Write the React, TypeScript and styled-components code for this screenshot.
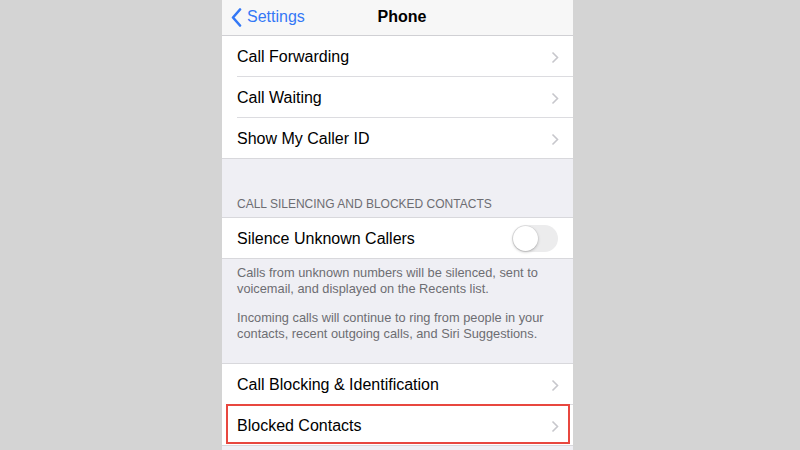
import React from 'react';
import styled, { createGlobalStyle } from 'styled-components';

const GlobalStyle = createGlobalStyle`
  html, body {
    margin: 0;
    padding: 0;
    background: #d4d4d4;
  }
  body {
    font-family: "Liberation Sans", Arial, sans-serif;
    -webkit-font-smoothing: antialiased;
  }
`;

const Page = styled.div`
  width: 800px;
  height: 450px;
  overflow: hidden;
  padding-left: 222px;
  box-sizing: border-box;
`;

const Screen = styled.div`
  width: 351px;
  height: 450px;
  background: #efeff4;
  display: flex;
  flex-direction: column;
`;

const NavBar = styled.div`
  height: 36px;
  flex-shrink: 0;
  background: #f7f7f7;
  border-bottom: 1px solid #d0d0d4;
  box-sizing: border-box;
  display: grid;
  grid-template-columns: 1fr auto 1fr;
  align-items: center;
  padding: 0 0 1px 9px;
`;

const BackLink = styled.div`
  display: flex;
  align-items: center;
  gap: 5px;
  color: #3478f6;
  font-size: 16px;
`;

const Title = styled.div`
  font-weight: bold;
  font-size: 16px;
  color: #000;
`;

const Group = styled.div<{ $top?: boolean }>`
  background: #fff;
  border-top: ${(p) => (p.$top ? 'none' : '1px solid #d8d8dc')};
  border-bottom: 1px solid #d8d8dc;
`;

const Row = styled.div<{ $last?: boolean }>`
  position: relative;
  box-sizing: border-box;
  height: ${(p) => (p.$last ? '40px' : '41px')};
  padding: 2px 14px 0 0;
  margin-left: 15px;
  display: flex;
  align-items: center;
  justify-content: space-between;
  border-bottom: ${(p) => (p.$last ? 'none' : '1px solid #dcdce0')};
  font-size: 16px;
  color: #000;
`;

const Highlight = styled.div`
  position: absolute;
  left: -11px;
  right: 3px;
  top: -1px;
  bottom: 1px;
  border: 2px solid #e8473f;
  pointer-events: none;
`;

const Chevron = () => (
  <svg width="8" height="13" viewBox="0 0 8 13">
    <path d="M1.5 1.5 L6.5 6.5 L1.5 11.5" fill="none" stroke="#c7c7cc" strokeWidth="1.6" />
  </svg>
);

const BackChevron = () => (
  <svg width="11" height="19" viewBox="0 0 11 19">
    <path d="M9 1.5 L2 9.5 L9 17.5" fill="none" stroke="#3478f6" strokeWidth="2.6" strokeLinecap="round" strokeLinejoin="round" />
  </svg>
);

const SectionHeader = styled.div`
  height: 58px;
  padding: 0 15px 6px;
  box-sizing: border-box;
  display: flex;
  align-items: flex-end;
  font-size: 12px;
  color: #6d6d72;
`;

const Footer = styled.div`
  padding: 6px 15px 22px;
  font-size: 12.8px;
  line-height: 15.5px;
  color: #6d6d72;

  p {
    margin: 0 0 14px;
  }
  p:last-child {
    margin: 0;
  }
`;

const Toggle = styled.div`
  width: 46px;
  height: 27px;
  border-radius: 14px;
  background: #ececed;
  position: relative;
  margin: -2px 1px 0 0;
`;

const Knob = styled.div`
  position: absolute;
  left: 1px;
  top: 1px;
  width: 25px;
  height: 25px;
  border-radius: 50%;
  background: #fff;
  box-shadow: 0 1px 3px rgba(0, 0, 0, 0.25), 0 0 0 0.5px rgba(0, 0, 0, 0.06);
`;

export default function App() {
  return (
    <>
      <GlobalStyle />
      <Page>
        <Screen>
          <NavBar>
            <BackLink>
              <BackChevron />
              Settings
            </BackLink>
            <Title>Phone</Title>
            <div />
          </NavBar>

          <Group $top>
            <Row>
              Call Forwarding
              <Chevron />
            </Row>
            <Row>
              Call Waiting
              <Chevron />
            </Row>
            <Row $last>
              Show My Caller ID
              <Chevron />
            </Row>
          </Group>

          <SectionHeader>CALL SILENCING AND BLOCKED CONTACTS</SectionHeader>

          <Group>
            <Row $last>
              Silence Unknown Callers
              <Toggle>
                <Knob />
              </Toggle>
            </Row>
          </Group>

          <Footer>
            <p>
              Calls from unknown numbers will be silenced, sent to voicemail, and displayed on the Recents list.
            </p>
            <p>
              Incoming calls will continue to ring from people in your contacts, recent outgoing calls, and Siri Suggestions.
            </p>
          </Footer>

          <Group>
            <Row>
              Call Blocking &amp; Identification
              <Chevron />
            </Row>
            <Row $last>
              Blocked Contacts
              <Chevron />
              <Highlight />
            </Row>
          </Group>
        </Screen>
      </Page>
    </>
  );
}
